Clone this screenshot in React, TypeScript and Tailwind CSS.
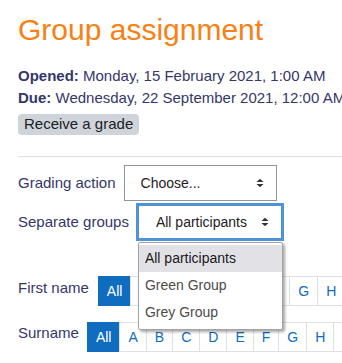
import React from 'react'

const letters = ['A', 'B', 'C', 'D', 'E', 'F', 'G', 'H', 'I', 'J', 'K', 'L']

const Arrows: React.FC = () => (
  <svg width="8" height="9" viewBox="0 0 8 9" className="absolute top-1/2 -translate-y-1/2 right-[12px]">
    <path d="M0.5 3.6 L4 0.3 L7.5 3.6 Z" fill="#333" />
    <path d="M0.5 5.4 L4 8.7 L7.5 5.4 Z" fill="#333" />
  </svg>
)

const InitialsBar: React.FC<{ label: string; gap: string; pad: string }> = ({ label, gap, pad }) => (
  <div className="flex items-start">
    <span className={`shrink-0 whitespace-nowrap text-[15px] leading-[22px] ${pad} ${gap}`}>{label}</span>
    <div className="flex shrink-0 text-[14px] leading-[20px]">
      <span className="shrink-0 px-2 py-1 border border-[#0f6cbf] bg-[#0f6cbf] text-white">All</span>
      {letters.map((l) => (
        <span key={l} className="shrink-0 -ml-px px-2 py-1 border border-[#dee2e6] bg-white text-[#0f6cbf]">
          {l}
        </span>
      ))}
    </div>
  </div>
)

export default function App() {
  return (
    <div
      className="w-[342px] h-[363px] overflow-hidden bg-white text-[#34376a]"
      style={{ fontFamily: '"Liberation Sans", Arial, sans-serif' }}
    >
      <div className="w-[600px] pl-[18px] pt-[12px]">
        {/* Heading */}
        <h1 className="text-[30px] leading-[36px] text-[#f98012]">Group assignment</h1>

        {/* Dates */}
        <div className="mt-[17px] text-[15px] leading-[22px] whitespace-nowrap">
          <div>
            <b>Opened:</b> Monday, 15 February 2021, 1:00 AM
          </div>
          <div>
            <b>Due:</b> Wednesday, 22 September 2021, 12:00 AM
          </div>
        </div>
        <div className="mt-[5px] inline-flex items-center h-[21px] px-[6px] rounded-[4px] bg-[#ced4da] text-[15px] text-[#1d2125]">
          Receive a grade
        </div>

        <div className="mt-[20px] w-[324px] h-px bg-[#dee2e6]" />

        {/* Grading action */}
        <div className="mt-[8px] flex items-center">
          <span className="shrink-0 text-[15px] mr-[8px]">Grading action</span>
          <div className="relative shrink-0 w-[153px] h-[36px] border border-[#8f959e] bg-white flex items-center pl-[16px] text-[14px] text-[#1d2125]">
            Choose...
            <Arrows />
          </div>
        </div>

        {/* Separate groups */}
        <div className="mt-[2px] flex items-center">
          <span className="shrink-0 text-[15px] mr-[7px]">Separate groups</span>
          <div className="relative shrink-0">
            <div className="relative w-[148px] h-[38px] border-[3px] border-[#4f92d8] bg-white flex items-center pl-[17px] text-[14px] text-[#1d2125]">
              All participants
              <Arrows />
            </div>
            {/* open dropdown */}
            <div className="absolute z-10 top-[39px] left-[2px] w-[145px] pt-[2px] pb-[3px] bg-white border border-[#a3a3a3] rounded-[2px] shadow-[2px_2px_3px_rgba(0,0,0,0.35)] text-[14px]">
              <div className="h-[27px] px-[6px] flex items-center bg-[#e2e1e6] text-[#1a1a1a]">All participants</div>
              <div className="h-[27px] px-[6px] flex items-center text-[#4d4a4a]">Green Group</div>
              <div className="h-[27px] px-[6px] flex items-center text-[#4d4a4a]">Grey Group</div>
            </div>
          </div>
        </div>

        {/* Initials bars */}
        <div className="mt-[35px]">
          <InitialsBar label="First name" gap="mr-[9px]" pad="pt-px" />
        </div>
        <div className="mt-[16px]">
          <InitialsBar label="Surname" gap="mr-[8px]" pad="" />
        </div>
      </div>
    </div>
  )
}
